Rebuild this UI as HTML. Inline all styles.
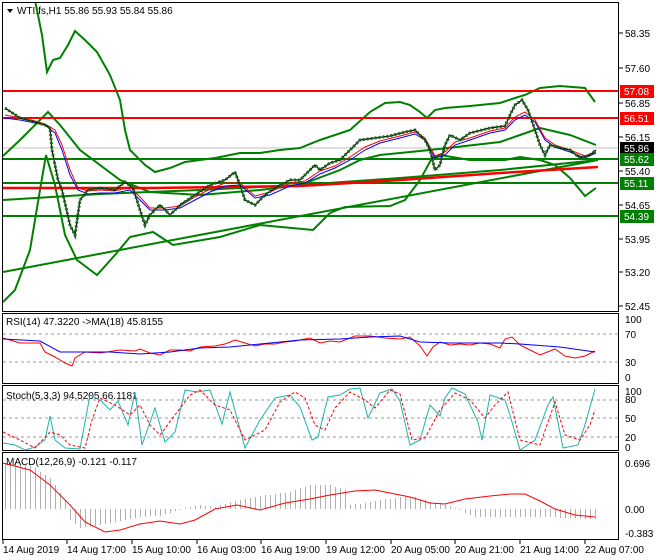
<!DOCTYPE html>
<html><head><meta charset="utf-8"><style>
html,body{margin:0;padding:0;background:#fff;}
svg{display:block;font-family:"Liberation Sans",sans-serif;font-size:10px;}
</style></head><body>
<svg width="660" height="560" viewBox="0 0 660 560" xmlns="http://www.w3.org/2000/svg">
<rect width="660" height="560" fill="#fff"/>
<g fill="none" stroke="#000" stroke-width="1">
<rect x="2.5" y="2.5" width="616" height="309"/>
<rect x="2.5" y="313.5" width="616" height="70"/>
<rect x="2.5" y="385.5" width="616" height="65"/>
<rect x="2.5" y="452.5" width="616" height="87"/>
</g>
<g stroke="#000">
<line x1="619" y1="33" x2="623" y2="33"/><line x1="619" y1="68" x2="623" y2="68"/><line x1="619" y1="103" x2="623" y2="103"/><line x1="619" y1="137" x2="623" y2="137"/><line x1="619" y1="171" x2="623" y2="171"/><line x1="619" y1="205" x2="623" y2="205"/><line x1="619" y1="239" x2="623" y2="239"/><line x1="619" y1="272" x2="623" y2="272"/><line x1="619" y1="306" x2="623" y2="306"/>
</g>
<g fill="#000">
<text x="625" y="37">58.35</text><text x="625" y="72">57.60</text><text x="625" y="107">56.85</text><text x="625" y="141">56.15</text><text x="625" y="175">55.40</text><text x="625" y="209">54.65</text><text x="625" y="243">53.95</text><text x="625" y="276">53.20</text><text x="625" y="310">52.45</text>
<text x="625" y="323">100</text><text x="625" y="338">70</text><text x="625" y="366">30</text><text x="625" y="381">0</text>
<text x="625" y="395">100</text><text x="625" y="403">80</text><text x="625" y="422">50</text><text x="625" y="441">20</text><text x="625" y="451">0</text>
<text x="625" y="467">0.696</text><text x="625" y="513">0.00</text><text x="625" y="537">-0.383</text>
</g>
<g fill="#000">
<text x="3" y="553">14 Aug 2019</text><text x="67" y="553">14 Aug 17:00</text><text x="132" y="553">15 Aug 10:00</text><text x="197" y="553">16 Aug 03:00</text><text x="261" y="553">16 Aug 19:00</text><text x="326" y="553">19 Aug 12:00</text><text x="391" y="553">20 Aug 05:00</text><text x="455" y="553">20 Aug 21:00</text><text x="520" y="553">21 Aug 14:00</text><text x="585" y="553">22 Aug 07:00</text>
</g>
<g stroke="#000"><line x1="3" y1="540" x2="3" y2="544"/><line x1="67" y1="540" x2="67" y2="544"/><line x1="132" y1="540" x2="132" y2="544"/><line x1="197" y1="540" x2="197" y2="544"/><line x1="261" y1="540" x2="261" y2="544"/><line x1="326" y1="540" x2="326" y2="544"/><line x1="391" y1="540" x2="391" y2="544"/><line x1="455" y1="540" x2="455" y2="544"/><line x1="520" y1="540" x2="520" y2="544"/><line x1="585" y1="540" x2="585" y2="544"/></g>
<clipPath id="cm"><rect x="3" y="3" width="615" height="308"/></clipPath>
<g clip-path="url(#cm)">
<line x1="3" y1="148" x2="618" y2="148" stroke="#c0c0c0"/>
<g stroke="#008000" stroke-width="2" fill="none">
<line x1="3" y1="159" x2="618" y2="159"/>
<line x1="3" y1="183" x2="618" y2="183"/>
<line x1="3" y1="216" x2="618" y2="216"/>
<line x1="3" y1="272" x2="598" y2="160"/>
<polyline points="3,200 100,194 200,190 300,185 400,178 500,170 598,160"/>
<polyline points="35,0 42,35 47,72 53,60 60,58 68,45 75,31 85,40 97,52 110,75 120,100 125,130 130,150 145,165 155,172 170,168 185,162 215,158 240,153 260,153 280,150 300,148 320,140 350,130 370,112 385,103 400,102 410,105 420,112 427,118 435,110 445,108 470,106 500,103 515,98 525,95 540,88 560,86 585,88 595,102"/>
<polyline points="3,156 20,140 48,112 60,125 80,150 120,180 150,192 200,195 260,190 300,185 340,170 360,160 380,155 430,150 500,142 520,135 540,128 570,135 596,145"/>
<polyline points="3,302 15,290 30,250 40,190 46,155 55,185 65,235 77,260 97,275 115,255 130,237 153,232 173,245 220,237 260,225 313,230 330,213 345,207 390,206 405,200 420,180 432,158 440,155 470,160 505,160 520,157 540,160 555,165 570,178 585,196 596,188"/>
</g>
<polyline points="3,188 150,188 300,186 400,180 500,173 598,167" stroke="#ff0000" stroke-width="2.5" fill="none"/>
<line x1="3" y1="91" x2="618" y2="91" stroke="#ff0000" stroke-width="2"/>
<line x1="3" y1="118" x2="618" y2="118" stroke="#ff0000" stroke-width="2"/>
<!-- MAs -->
<polyline fill="none" stroke="#0000ff" points="5,118 20,120 35,123 45,125 55,133 62,150 70,175 78,190 88,194 100,193 115,193 130,190 140,200 150,210 165,210 180,208 195,200 210,192 225,186 240,185 255,198 270,195 290,186 305,183 320,174 335,168 350,160 365,150 380,143 400,138 415,134 425,140 435,158 445,155 455,145 470,140 490,133 505,130 515,120 525,115 535,122 545,140 555,147 570,152 585,158 596,153"/>
<polyline fill="none" stroke="#ff0000" points="5,115 20,118 35,121 45,124 55,130 62,145 70,170 78,188 88,191 100,190 115,191 130,187 140,197 150,208 165,208 180,206 195,197 210,189 225,183 240,183 255,196 270,192 290,183 305,181 320,171 335,166 350,157 365,147 380,141 400,136 415,132 425,138 435,156 445,152 455,142 470,138 490,131 505,128 515,117 525,112 535,120 545,138 555,145 570,150 585,156 596,152"/>
<!-- price -->
<polyline fill="none" stroke="#000" stroke-width="1.2" points="5,108 20,118 35,122 45,125 50,128 52,150 58,180 62,190 70,225 75,235 80,200 88,190 100,188 115,190 125,182 133,188 140,210 145,225 150,215 160,205 170,215 180,205 195,195 210,185 225,180 235,172 240,185 245,200 255,205 265,195 275,188 290,180 300,180 315,165 320,170 330,163 340,160 350,150 360,140 375,138 390,136 405,132 415,130 425,140 430,150 435,170 440,165 445,145 450,135 460,140 470,133 490,128 505,126 510,115 515,105 522,100 528,110 535,130 540,145 545,155 550,145 560,148 570,150 580,158 590,155 596,150"/>
<polyline fill="none" stroke="#1a6b1a" stroke-width="3" stroke-dasharray="2,2" points="5,108 20,118 35,122 45,125 50,128 52,150 58,180 62,190 70,225 75,235 80,200 88,190 100,188 115,190 125,182 133,188 140,210 145,225 150,215 160,205 170,215 180,205 195,195 210,185 225,180 235,172 240,185 245,200 255,205 265,195 275,188 290,180 300,180 315,165 320,170 330,163 340,160 350,150 360,140 375,138 390,136 405,132 415,130 425,140 430,150 435,170 440,165 445,145 450,135 460,140 470,133 490,128 505,126 510,115 515,105 522,100 528,110 535,130 540,145 545,155 550,145 560,148 570,150 580,158 590,155 596,150"/>
</g>
<rect x="620" y="85" width="34" height="13" fill="#ff0000"/><text x="624" y="95" fill="#fff">57.08</text>
<rect x="620" y="112" width="34" height="13" fill="#ff0000"/><text x="624" y="122" fill="#fff">56.51</text>
<rect x="620" y="142" width="34" height="13" fill="#000"/><text x="624" y="152" fill="#fff">55.86</text>
<rect x="620" y="153" width="34" height="13" fill="#008000"/><text x="624" y="163" fill="#fff">55.62</text>
<rect x="620" y="177" width="34" height="13" fill="#008000"/><text x="624" y="187" fill="#fff">55.11</text>
<rect x="620" y="210" width="34" height="13" fill="#008000"/><text x="624" y="220" fill="#fff">54.39</text>
<path d="M7 9 L13 9 L10 13 Z" fill="#000"/>
<text x="17" y="14" fill="#000">WTI.fs,H1  55.86 55.93 55.84 55.86</text>
<!-- RSI -->
<g stroke="#999" stroke-dasharray="3,3"><line x1="3" y1="334" x2="618" y2="334"/><line x1="3" y1="362" x2="618" y2="362"/></g>
<text x="6" y="325" fill="#000">RSI(14) 47.3220  -&gt;MA(18) 45.8155</text>
<polyline fill="none" stroke="#ff0000" points="3,338 20,343 40,343 45,352 55,357 65,363 72,366 75,358 85,352 100,353 120,350 135,351 140,349 150,353 160,355 170,350 180,350 190,351 200,347 215,346 225,344 235,340 245,343 255,346 265,344 275,344 285,342 295,341 310,338 320,343 330,341 340,342 355,336 370,336 385,338 400,339 410,337 420,346 427,356 433,347 440,342 450,345 460,344 470,345 480,343 490,344 500,348 505,339 512,337 520,345 530,350 540,355 555,349 565,356 575,358 585,356 595,351"/>
<polyline fill="none" stroke="#0000ff" points="3,339 40,341 60,352 80,352 110,352 140,354 170,352 200,348 230,347 260,344 300,340 340,339 370,337 400,336 420,342 450,343 500,343 520,344 560,347 595,352"/>
<!-- Stoch -->
<g stroke="#999" stroke-dasharray="3,3"><line x1="3" y1="400" x2="618" y2="400"/><line x1="3" y1="418" x2="618" y2="418"/><line x1="3" y1="437" x2="618" y2="437"/></g>
<text x="6" y="399" fill="#000">Stoch(5,3,3) 94.5205 66.1181</text>
<polyline fill="none" stroke="#20b2aa" points="3,443 15,445 25,450 35,447 45,440 50,416 55,440 65,448 80,449 90,395 100,400 110,410 118,401 128,425 135,392 142,445 155,408 165,442 175,432 185,390 197,392 210,390 222,424 230,392 245,448 260,420 275,398 290,395 300,407 312,440 318,437 328,397 340,395 350,389 360,388 368,418 380,393 392,389 400,401 410,445 420,440 430,405 440,416 445,398 452,388 465,394 478,422 482,440 490,395 505,400 510,415 520,450 535,440 548,405 553,397 563,448 578,445 585,425 595,389"/>
<polyline fill="none" stroke="#ff0000" stroke-dasharray="3,2" points="3,432 20,440 35,448 50,432 60,435 70,445 85,448 92,420 100,398 115,405 130,415 140,405 150,425 160,435 175,415 190,395 200,390 215,405 230,410 245,440 265,430 280,402 295,392 305,398 315,425 325,430 335,408 350,392 365,400 375,408 390,390 400,394 412,440 425,438 440,410 455,393 470,400 485,418 495,405 508,392 520,440 540,445 555,402 565,435 580,440 590,425 595,410"/>
<!-- MACD -->
<path stroke="#b0b0b0" fill="none" d="M5.5 509V463M10.5 509V464M15.5 509V464M20.5 509V464M25.5 509V465M30.5 509V465M35.5 509V468M40.5 509V472M45.5 509V475M50.5 509V478M55.5 509V485M60.5 509V493M65.5 509V500M70.5 509V520M75.5 509V524M80.5 509V528M85.5 509V527M90.5 509V527M95.5 509V526M100.5 509V525M105.5 509V524M110.5 509V523M115.5 509V522M120.5 509V521M125.5 509V520M130.5 509V519M135.5 509V518M140.5 509V517M145.5 509V517M150.5 509V516M155.5 509V516M160.5 509V516M165.5 509V514M170.5 509V513M175.5 509V511M180.5 509V510M185.5 509V508M190.5 509V507M195.5 509V506M200.5 509V505M205.5 509V506M210.5 509V506M215.5 509V507M220.5 509V505M225.5 509V504M230.5 509V502M235.5 509V501M240.5 509V500M245.5 509V499M250.5 509V498M255.5 509V497M260.5 509V496M265.5 509V495M270.5 509V495M275.5 509V494M280.5 509V493M285.5 509V493M290.5 509V492M295.5 509V490M300.5 509V488M305.5 509V487M310.5 509V485M315.5 509V485M320.5 509V485M325.5 509V485M330.5 509V485M335.5 509V487M340.5 509V488M345.5 509V490M350.5 509V505M355.5 509V504M360.5 509V504M365.5 509V503M370.5 509V502M375.5 509V501M380.5 509V500M385.5 509V499M390.5 509V499M395.5 509V498M400.5 509V497M405.5 509V497M410.5 509V497M415.5 509V497M420.5 509V499M425.5 509V500M430.5 509V502M435.5 509V503M440.5 509V504M445.5 509V505M450.5 509V506M455.5 509V508M460.5 509V510M465.5 509V513M470.5 509V515M475.5 509V517M480.5 509V517M485.5 509V517M490.5 509V517M495.5 509V517M500.5 509V517M505.5 509V517M510.5 509V517M515.5 509V517M520.5 509V517M525.5 509V517M530.5 509V517M535.5 509V517M540.5 509V517M545.5 509V517M550.5 509V517M555.5 509V517M560.5 509V518M565.5 509V518M570.5 509V518M575.5 509V518M580.5 509V519M585.5 509V519M590.5 509V519M595.5 509V519"/>
<text x="6" y="465" fill="#000">MACD(12,26,9) -0.121 -0.117</text>
<polyline fill="none" stroke="#ff0000" points="3,463 30,470 50,485 70,505 85,522 105,532 120,530 140,524 160,521 180,524 195,520 215,509 237,505 260,510 285,503 310,499 330,495 355,491 375,490 390,493 410,497 430,503 445,504 465,499 490,496 510,494 525,494 540,501 555,509 575,515 595,517"/>
</svg>
</body></html>
